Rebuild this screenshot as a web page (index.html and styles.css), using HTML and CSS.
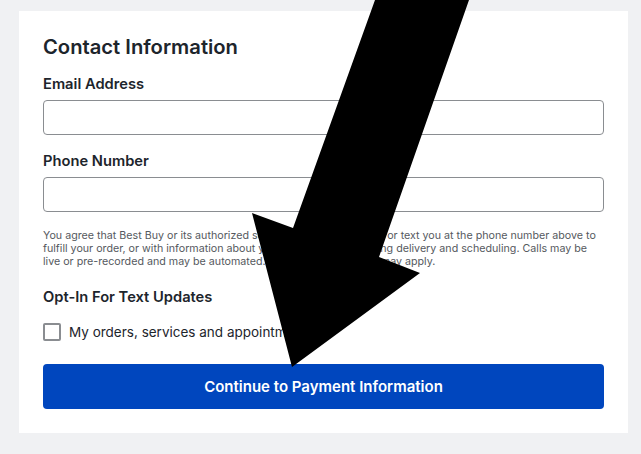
FILE: index.html
```html
<!DOCTYPE html>
<html lang="en">
<head>
<meta charset="utf-8">
<title>Checkout – Contact Information</title>
<link rel="stylesheet" href="styles.css">
</head>
<body>
  <main class="page">
    <section class="card">
      <h1 class="card-title">Contact Information</h1>

      <form class="contact-form">
        <div class="field">
          <label class="field-label" for="email">Email Address</label>
          <input class="field-input" id="email" type="email">
        </div>

        <div class="field">
          <label class="field-label" for="phone">Phone Number</label>
          <input class="field-input" id="phone" type="tel">
        </div>

        <p class="disclaimer">You agree that Best Buy or its authorized service providers may call or text you at the phone number above to<br>fulfill your order, or with information about your order items, including delivery and scheduling. Calls may be<br>live or pre-recorded and may be automated. Message &amp; data rates may apply.</p>

        <div class="optin">
          <h2 class="optin-title">Opt-In For Text Updates</h2>
          <label class="check-row">
            <span class="checkbox"></span>
            <span class="check-text">My orders, services and appointments</span>
          </label>
        </div>

        <button class="primary-btn" type="button">Continue to Payment Information</button>
      </form>
    </section>
  </main>

  <svg class="pointer-arrow" width="641" height="454" viewBox="0 0 641 454" aria-hidden="true">
    <polygon points="375,0 469,0 379,257 420,273 292,367 252,213 293,228" fill="#000"/>
  </svg>
</body>
</html>
```

FILE: styles.css
```css
html, body {
  margin: 0;
  padding: 0;
}

body {
  background: #f0f1f3;
  font-family: Inter, "Liberation Sans", Arial, sans-serif;
  color: #1d252c;
  width: 641px;
  height: 454px;
  overflow: hidden;
}

.page {
  padding: 11px 0 0 19px;
}

.card {
  width: 561px;
  background: #fff;
  padding: 24px;
}

.card-title {
  margin: 0;
  font-size: 20.2px;
  line-height: 24px;
  font-weight: 600;
}

.contact-form {
  display: flex;
  flex-direction: column;
  margin-top: 16px;
}

.field {
  display: flex;
  flex-direction: column;
  gap: 7px;
  margin-bottom: 17px;
}

.field-label {
  font-size: 14.7px;
  line-height: 18px;
  font-weight: 600;
}

.field-input {
  box-sizing: border-box;
  height: 35px;
  width: 100%;
  margin: 0;
  border: 1px solid #8a8d91;
  border-radius: 4px;
  background: #fff;
  font: inherit;
}

.disclaimer {
  margin: 0;
  font-size: 10.7px;
  line-height: 13px;
  color: #55595e;
}

.optin {
  margin-top: 20px;
  display: flex;
  flex-direction: column;
  gap: 17px;
}

.optin-title {
  margin: 0;
  font-size: 14.7px;
  line-height: 18px;
  font-weight: 600;
}

.check-row {
  display: flex;
  align-items: center;
  gap: 8px;
  height: 18px;
}

.checkbox {
  box-sizing: border-box;
  width: 18px;
  height: 18px;
  border: 2px solid #8a8d91;
  border-radius: 2px;
  background: #fff;
}

.check-text {
  font-size: 13.5px;
  line-height: 18px;
  color: #1d252c;
}

.primary-btn {
  margin-top: 23px;
  height: 45px;
  width: 100%;
  border: none;
  border-radius: 4px;
  background: #0046be;
  color: #fff;
  font-family: inherit;
  font-size: 15px;
  font-weight: 600;
}

.pointer-arrow {
  position: absolute;
  left: 0;
  top: 0;
  pointer-events: none;
}
```
